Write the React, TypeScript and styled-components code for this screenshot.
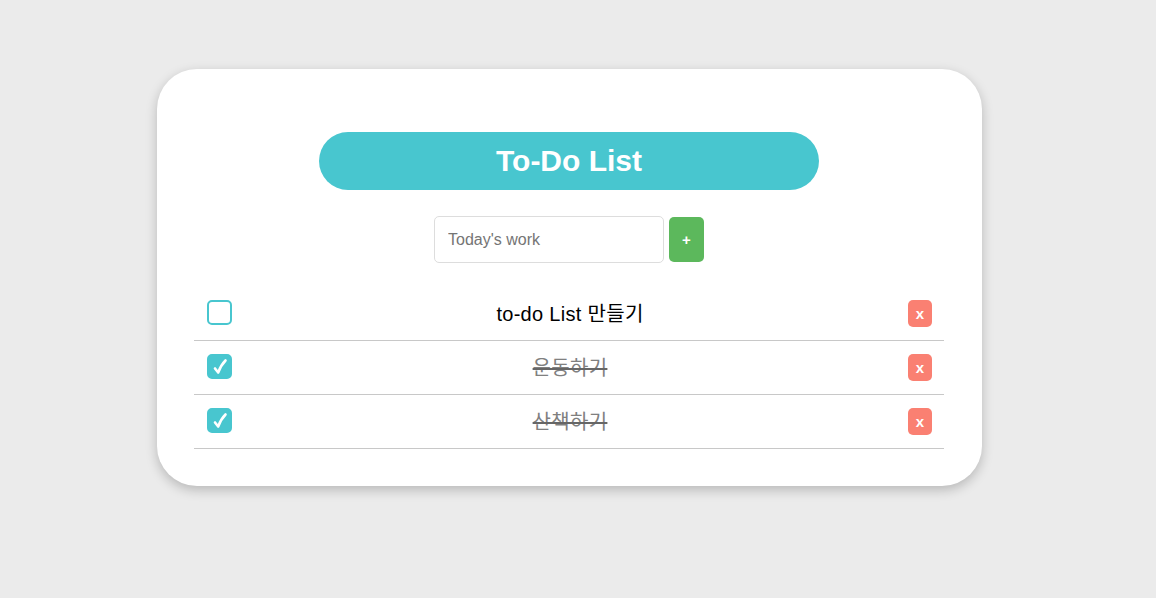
import { useState } from 'react';
import styled, { createGlobalStyle } from 'styled-components';

interface Todo {
  id: number;
  text: string;
  done: boolean;
}

const initialTodos: Todo[] = [
  { id: 1, text: 'to-do List 만들기', done: false },
  { id: 2, text: '운동하기', done: true },
  { id: 3, text: '산책하기', done: true },
];

export default function App() {
  const [todos, setTodos] = useState<Todo[]>(initialTodos);
  const [value, setValue] = useState('');

  const add = () => {
    if (!value.trim()) return;
    setTodos([...todos, { id: Date.now(), text: value, done: false }]);
    setValue('');
  };

  const toggle = (id: number) =>
    setTodos(todos.map((t) => (t.id === id ? { ...t, done: !t.done } : t)));

  const remove = (id: number) => setTodos(todos.filter((t) => t.id !== id));

  return (
    <>
      <GlobalStyle />
      <Page>
        <Card>
          <Title>To-Do List</Title>

          <Form>
            <Input
              placeholder="Today's work"
              value={value}
              onChange={(e) => setValue(e.target.value)}
            />
            <AddButton onClick={add}>+</AddButton>
          </Form>

          <List>
            {todos.map((todo) => (
              <Item key={todo.id}>
                <Check $checked={todo.done} onClick={() => toggle(todo.id)}>
                  {todo.done && (
                    <svg width="16" height="18" viewBox="0 0 16 18">
                      <path
                        d="M3 10.5 L6.2 14.5 Q9 7 13.5 2.5"
                        fill="none"
                        stroke="#fff"
                        strokeWidth="2.6"
                        strokeLinecap="round"
                        strokeLinejoin="round"
                      />
                    </svg>
                  )}
                </Check>
                <ItemText $done={todo.done}>{todo.text}</ItemText>
                <DeleteButton onClick={() => remove(todo.id)}>x</DeleteButton>
              </Item>
            ))}
          </List>
        </Card>
      </Page>
    </>
  );
}

const GlobalStyle = createGlobalStyle`
  body {
    margin: 0;
    background: #ebebeb;
    font-family: Arial, "Liberation Sans", "Noto Sans CJK KR", sans-serif;
  }
`;

const Page = styled.div`
  min-height: 598px;
  display: flex;
  align-items: flex-start;
  padding: 69px 0 0 157px;
  box-sizing: border-box;
`;

const Card = styled.div`
  width: 825px;
  box-sizing: border-box;
  padding: 63px 38px 37px 37px;
  background: #fff;
  border-radius: 40px;
  box-shadow: 0 4px 12px rgba(0, 0, 0, 0.22);
`;

const Title = styled.h1`
  width: 500px;
  height: 58px;
  margin: 0 auto;
  border-radius: 29px;
  background: #48c6cf;
  color: #fff;
  font-size: 30px;
  font-weight: 700;
  display: flex;
  align-items: center;
  justify-content: center;
`;

const Form = styled.div`
  display: flex;
  justify-content: center;
  align-items: center;
  gap: 5px;
  margin-top: 26px;
`;

const Input = styled.input`
  width: 230px;
  height: 47px;
  box-sizing: border-box;
  padding: 0 13px;
  border: 1px solid #ddd;
  border-radius: 5px;
  font-size: 16px;
  font-family: Arial, "Liberation Sans", sans-serif;
  color: #333;
  outline: none;

  &::placeholder {
    color: #757575;
  }
`;

const AddButton = styled.button`
  width: 35px;
  height: 45px;
  border: none;
  border-radius: 5px;
  background: #5cb85c;
  color: #fff;
  font-size: 15px;
  font-weight: 700;
  font-family: Arial, "Liberation Sans", sans-serif;
  cursor: pointer;
`;

const List = styled.ul`
  list-style: none;
  margin: 24px 0 0;
  padding: 0;
`;

const Item = styled.li`
  display: flex;
  align-items: flex-start;
  padding: 13px 12px 13px 13px;
  border-bottom: 1px solid #c8c8c8;
`;

const Check = styled.span<{ $checked: boolean }>`
  width: 25px;
  height: 25px;
  box-sizing: border-box;
  border-radius: 5px;
  border: 2px solid #48c6cf;
  background: ${(p) => (p.$checked ? '#48c6cf' : '#fff')};
  display: flex;
  align-items: center;
  justify-content: center;
  cursor: pointer;
  flex-shrink: 0;
`;

const ItemText = styled.span<{ $done: boolean }>`
  flex: 1;
  text-align: center;
  font-size: 20px;
  line-height: 25px;
  padding-top: 2px;
  letter-spacing: 0.3px;
  color: ${(p) => (p.$done ? '#808080' : '#000')};
  text-decoration: ${(p) => (p.$done ? 'line-through' : 'none')};
  text-decoration-thickness: 2px;
  text-decoration-color: #666;
`;

const DeleteButton = styled.button`
  width: 24px;
  height: 27px;
  padding: 0;
  border: none;
  border-radius: 5px;
  background: #fa8072;
  color: #fff;
  font-size: 15px;
  font-weight: 700;
  font-family: Arial, "Liberation Sans", sans-serif;
  line-height: 25px;
  cursor: pointer;
  flex-shrink: 0;
`;
